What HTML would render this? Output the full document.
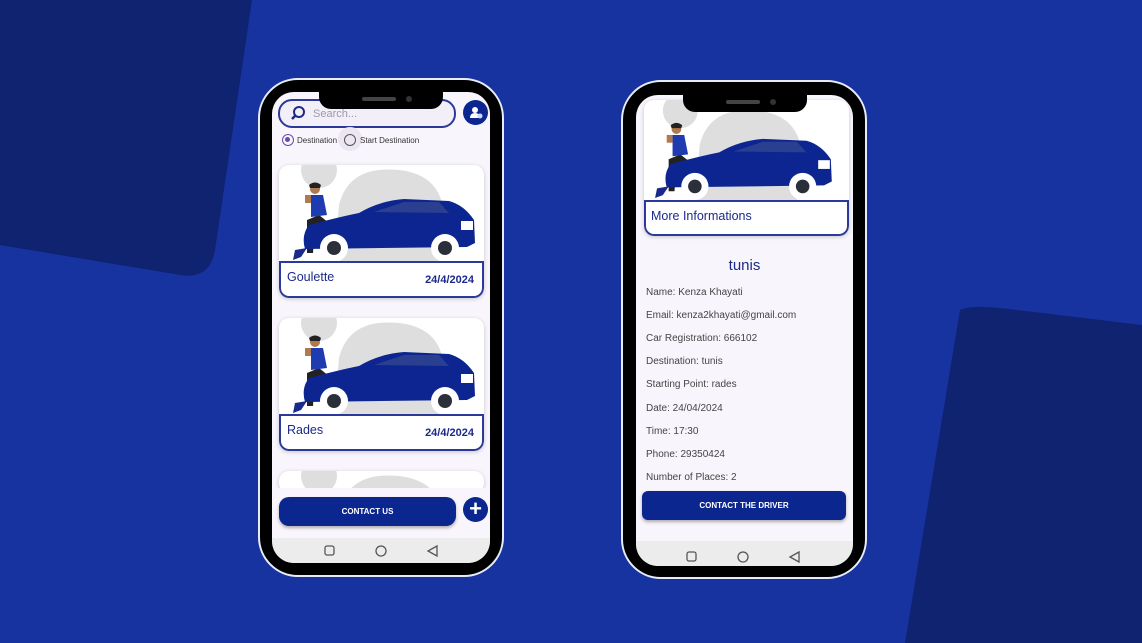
<!DOCTYPE html>
<html><head><meta charset="utf-8"><style>
*{margin:0;padding:0;box-sizing:border-box}
body{width:1142px;height:643px;overflow:hidden;background:#1633a0;font-family:"Liberation Sans",sans-serif;position:relative}
.a{position:absolute}
.phone{position:absolute;width:246px;height:499px;border-radius:40px;background:#000;border:2.5px solid #e8ecf8}
.screen{position:absolute;background:#f9f5fc;border-radius:22px;overflow:hidden}
.notch{position:absolute;width:124px;height:17px;background:#000;border-radius:0 0 12px 12px}
.card{position:absolute;width:205px;background:#fff;border-radius:10px;box-shadow:0 1px 4px rgba(0,0,0,.2);overflow:hidden}
.cap{position:absolute;left:0;right:0;bottom:0;height:37px;border:2px solid #2b3a9a;border-radius:0 0 10px 10px;background:#fff;color:#1b2a8a;font-size:12.5px}
.info{position:absolute;left:10px;font-size:10px;color:#444}
.btn{position:absolute;background:#0c2690;color:#fff;font-weight:bold;font-size:8px;text-align:center;border-radius:10px;box-shadow:0 2px 3px rgba(0,0,0,.3)}
</style></head><body>
<svg class="a" style="left:0;top:0" width="1142" height="643">
<path d="M0 0H252L215 250Q210 280 180 275L0 245Z" fill="#0f2370"/>
<path d="M960 310Q970 305 1000 308L1142 325V643H905Z" fill="#0f2370"/>
</svg>

<svg width="0" height="0" style="position:absolute"><defs>
<g id="car">
<path d="M60 40Q70 0 120 5Q165 10 165 55L160 97H55Z" fill="#dedede"/>
<circle cx="40" cy="5" r="18" fill="#dedede"/>
<path d="M40 50L28 55L28 88L34 88L36 60L50 58Z" fill="#222"/>
<circle cx="36" cy="24" r="5" fill="#b07a50"/>
<path d="M30 20Q36 15 42 20L41 23L31 23Z" fill="#222"/>
<path d="M32 30L44 30L48 50L32 52Z" fill="#1f3bb0"/>
<rect x="26" y="30" width="6" height="8" fill="#b07a50"/>
<path d="M28 83L16 85L14 95L22 92Z" fill="#1a2a8a"/>
<path d="M30 60Q60 52 80 48Q100 36 125 34L170 36Q185 40 195 55L196 78L188 82L26 84Q22 70 30 60Z" fill="#0d2590"/>
<path d="M95 47L125 37L160 37L170 48Z" fill="#2a3f8f"/>
<rect x="182" y="56" width="12" height="9" fill="#fff"/>
<circle cx="55" cy="83" r="14" fill="#fff"/><circle cx="55" cy="83" r="7" fill="#2a2f3a"/>
<circle cx="166" cy="83" r="14" fill="#fff"/><circle cx="166" cy="83" r="7" fill="#2a2f3a"/>
</g></defs></svg>

<div class="phone" style="left:258px;top:78px"></div>
<div class="screen" style="left:272px;top:92px;width:218px;height:471px">
  <div class="a" style="left:6px;top:7px;width:178px;height:29px;border:2px solid #2b3a9a;border-radius:14px;background:#f3eff8"></div>
  <svg class="a" style="left:18px;top:13px" width="16" height="16"><circle cx="9" cy="7" r="5" fill="none" stroke="#1b2a8a" stroke-width="2"/><path d="M5 11L2 14" stroke="#1b2a8a" stroke-width="2.5"/></svg>
  <div class="a" style="left:41px;top:16px;font-size:11px;color:#9a9aa8">Search...</div>
  <div class="a" style="left:191px;top:8px;width:25px;height:25px;border-radius:50%;background:#0c2690"></div>
  <svg class="a" style="left:196px;top:13px" width="16" height="16"><circle cx="7" cy="5" r="3" fill="#fff"/><path d="M2 13Q2 8 7 8Q12 8 12 13Z" fill="#fff"/><circle cx="12" cy="11" r="2.5" fill="#cfd8ff"/></svg>
  <div class="a" style="left:66px;top:35px;width:24px;height:24px;border-radius:50%;background:#ebe6f2"></div>
  <div class="a" style="left:10px;top:42px;width:12px;height:12px;border:1.5px solid #6a4bb0;border-radius:50%"><div style="margin:2px;width:5px;height:5px;border-radius:50%;background:#6a4bb0"></div></div>
  <div class="a" style="left:25px;top:44px;font-size:8px;color:#333">Destination</div>
  <div class="a" style="left:72px;top:42px;width:12px;height:12px;border:1.5px solid #555;border-radius:50%"></div>
  <div class="a" style="left:88px;top:44px;font-size:8px;color:#333">Start Destination</div>
</div>
<div class="notch" style="left:319px;top:92px"></div>
<div class="a" style="left:362px;top:97px;width:34px;height:4px;border-radius:2px;background:#444"></div>
<div class="a" style="left:406px;top:96px;width:6px;height:6px;border-radius:50%;background:#333"></div>

<div class="card" style="left:279px;top:165px;height:133px"><svg width="205" height="97"><use href="#car"/></svg>
<div class="cap"><span class="a" style="left:6px;top:7px">Goulette</span><span class="a" style="right:8px;top:11px;font-weight:bold;font-size:11px">24/4/2024</span></div></div>
<div class="card" style="left:279px;top:318px;height:133px"><svg width="205" height="97"><use href="#car"/></svg>
<div class="cap"><span class="a" style="left:6px;top:7px">Rades</span><span class="a" style="right:8px;top:11px;font-weight:bold;font-size:11px">24/4/2024</span></div></div>
<div class="card" style="left:279px;top:471px;height:22px;overflow:hidden"><svg width="205" height="97"><use href="#car"/></svg></div>
<div class="a" style="left:272px;top:488px;width:218px;height:50px;background:#f9f5fc"></div>
<div class="btn" style="left:279px;top:497px;width:177px;height:29px;line-height:29px">CONTACT US</div>
<div class="a" style="left:463px;top:497px;width:25px;height:25px;border-radius:50%;background:#0c2690;color:#fff;font-size:22px;line-height:24px;text-align:center;font-weight:bold">+</div>
<div class="a" style="left:272px;top:538px;width:218px;height:25px;background:#ececec;border-radius:0 0 22px 22px"></div>
<svg class="a" style="left:320px;top:543px" width="120" height="16"><rect x="5" y="3" width="9" height="9" rx="2" fill="none" stroke="#555" stroke-width="1.3"/><circle cx="61" cy="8" r="5" fill="none" stroke="#555" stroke-width="1.3"/><path d="M117 3L108 8L117 13Z" fill="none" stroke="#555" stroke-width="1.3"/></svg>

<div class="phone" style="left:621px;top:80px"></div>
<div class="screen" style="left:636px;top:95px;width:217px;height:471px"></div>
<div class="card" style="left:644px;top:100px;height:136px;border-radius:10px"><svg width="200" height="100" viewBox="0 -6 205 103" style="margin-left:-3px"><use href="#car"/></svg>
<div class="cap" style="height:36px"><span class="a" style="left:5px;top:7px">More Informations</span></div></div>
<div class="notch" style="left:683px;top:95px"></div>
<div class="a" style="left:726px;top:100px;width:34px;height:4px;border-radius:2px;background:#444"></div>
<div class="a" style="left:770px;top:99px;width:6px;height:6px;border-radius:50%;background:#333"></div>
<div class="a" style="left:636px;top:257px;width:217px;text-align:center;font-size:15px;color:#1b2a8a">tunis</div>
<div class="info" style="left:646px;top:287px">Name: Kenza Khayati</div>
<div class="info" style="left:646px;top:310px">Email: kenza2khayati@gmail.com</div>
<div class="info" style="left:646px;top:333px">Car Registration: 666102</div>
<div class="info" style="left:646px;top:356px">Destination: tunis</div>
<div class="info" style="left:646px;top:379px">Starting Point: rades</div>
<div class="info" style="left:646px;top:403px">Date: 24/04/2024</div>
<div class="info" style="left:646px;top:426px">Time: 17:30</div>
<div class="info" style="left:646px;top:449px">Phone: 29350424</div>
<div class="info" style="left:646px;top:472px">Number of Places: 2</div>
<div class="btn" style="left:642px;top:491px;width:204px;height:29px;line-height:29px;border-radius:6px">CONTACT THE DRIVER</div>
<div class="a" style="left:636px;top:541px;width:217px;height:25px;background:#ececec;border-radius:0 0 22px 22px"></div>
<svg class="a" style="left:682px;top:549px" width="120" height="16"><rect x="5" y="3" width="9" height="9" rx="2" fill="none" stroke="#555" stroke-width="1.3"/><circle cx="61" cy="8" r="5" fill="none" stroke="#555" stroke-width="1.3"/><path d="M117 3L108 8L117 13Z" fill="none" stroke="#555" stroke-width="1.3"/></svg>
</body></html>
